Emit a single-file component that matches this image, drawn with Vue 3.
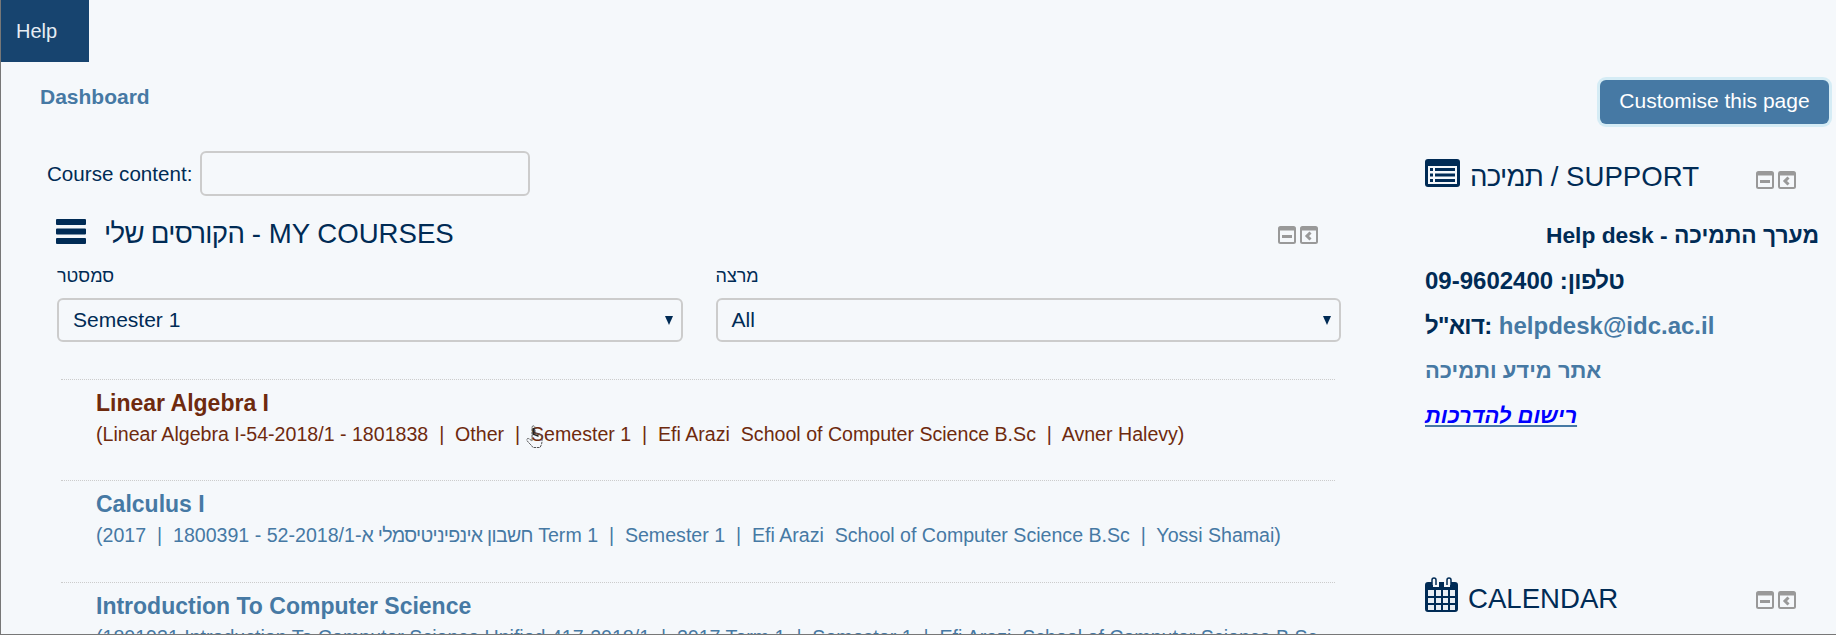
<script setup>
const courses = [
  {
    title: 'Linear Algebra I',
    lead: '(Linear Algebra I-54-2018/1 - 1801838  |  Other  |  Semester 1  |  Efi Arazi  School of Computer Science B.Sc  |  Avner Halevy)',
    active: true,
  },
  {
    title: 'Calculus I',
    lead: '(2017  |  ',
    hebrew: 'חשבון אינפיניטיסמלי א',
    rest: '-52-2018/1 - 1800391 Term 1  |  Semester 1  |  Efi Arazi  School of Computer Science B.Sc  |  Yossi Shamai)',
  },
  {
    title: 'Introduction To Computer Science',
    lead: '(1801931 Introduction To Computer Science Unified 417-2018/1  |  2017 Term 1  |  Semester 1  |  Efi Arazi  School of Computer Science B.Sc',
  },
]
</script>

<template>
  <div class="page">
    <nav class="topnav"><a class="help">Help</a></nav>

    <div class="crumbs">
      <a class="dashboard">Dashboard</a>
      <button class="customise">Customise this page</button>
    </div>

    <div class="columns">
      <main class="main">
        <div class="search">
          <label for="course-content">Course content:</label>
          <input id="course-content" type="text" />
        </div>

        <section class="block">
          <header class="block-head">
            <svg class="burger" viewBox="0 0 30 25"><path d="M1 0h28a1 1 0 0 1 1 1v4a1 1 0 0 1-1 1H1a1 1 0 0 1-1-1V1a1 1 0 0 1 1-1zM1 9.500h28a1 1 0 0 1 1 1v4a1 1 0 0 1-1 1H1a1 1 0 0 1-1-1v-4a1 1 0 0 1 1-1zM1 19h28a1 1 0 0 1 1 1v4a1 1 0 0 1-1 1H1a1 1 0 0 1-1-1v-4a1 1 0 0 1 1-1z" fill="#002b55" /></svg>
            <h2><span class="he">הקורסים שלי</span> - MY COURSES</h2>
            <span class="controls">
              <svg viewBox="0 0 18 18"><rect x="1" y="1" width="16" height="16" rx="1.500" fill="#f5f8fb" stroke="#999" stroke-width="2" /><path d="M1 1h16v3.500H1zM4 9h10v3H4z" fill="#999" /></svg>
              <svg viewBox="0 0 18 18"><rect x="1" y="1" width="16" height="16" rx="1.500" fill="#f5f8fb" stroke="#999" stroke-width="2" /><path d="M1 1h16v3.500H1z" fill="#999" /><path d="M10.500 6.500L7 10l3.500 3.500" fill="none" stroke="#999" stroke-width="3" /></svg>
            </span>
          </header>

          <div class="filters">
            <div class="filter">
              <label>סמסטר</label>
              <div class="select">Semester 1<span class="arrow"></span></div>
            </div>
            <div class="filter">
              <label>מרצה</label>
              <div class="select">All<span class="arrow"></span></div>
            </div>
          </div>

          <ul class="courses">
            <li v-for="c in courses" :key="c.title" :class="{ active: c.active }">
              <h3>{{ c.title }}</h3>
              <p>{{ c.lead }}<span v-if="c.hebrew" class="he">{{ c.hebrew }}</span>{{ c.rest }}</p>
            </li>
          </ul>
        </section>

        <svg class="cursor" viewBox="0 0 17 23">
          <path d="M6 2c.5-1.500 2.500-1.500 3 0v6l5 1.500c1.500.5 2 1.500 2 3v4c0 2.500-1 4-2 6H7c-1.500-2.500-4-4-6-7-.7-1.200.5-2.500 2-1.800l3 2.300z" fill="none" stroke="#555" stroke-width="1" stroke-dasharray="2.500 .8" />
          <path d="M6.500 3h2v6l4 1v2l-5-2-1 .5z" fill="#222" />
        </svg>
      </main>

      <aside class="side">
        <section class="panel support">
          <header class="block-head">
            <svg class="head-icon" viewBox="0 0 35 28">
              <rect width="35" height="28" rx="3" fill="#002b55" />
              <rect x="3" y="7" width="29" height="18" fill="#f5f8fb" />
              <path d="M5 9h3v3H5zM10 9h20v3H10zM5 14.500h3v3H5zM10 14.500h20v3H10zM5 20h3v3H5zM10 20h20v3H10z" fill="#002b55" />
            </svg>
            <h2><span class="he">תמיכה</span> / SUPPORT</h2>
            <span class="controls">
              <svg viewBox="0 0 18 18"><rect x="1" y="1" width="16" height="16" rx="1.500" fill="#f5f8fb" stroke="#999" stroke-width="2" /><path d="M1 1h16v3.500H1zM4 9h10v3H4z" fill="#999" /></svg>
              <svg viewBox="0 0 18 18"><rect x="1" y="1" width="16" height="16" rx="1.500" fill="#f5f8fb" stroke="#999" stroke-width="2" /><path d="M1 1h16v3.500H1z" fill="#999" /><path d="M10.500 6.500L7 10l3.500 3.500" fill="none" stroke="#999" stroke-width="3" /></svg>
            </span>
          </header>
          <div class="info">
            <p class="desk" dir="rtl">מערך התמיכה - Help desk</p>
            <p class="big"><span class="he">טלפון</span>: 09-9602400</p>
            <p class="big"><span class="he">דוא"ל</span>: <a class="link">helpdesk@idc.ac.il</a></p>
            <p><a class="link">אתר מידע ותמיכה</a></p>
            <p><a class="register">רישום להדרכות</a></p>
          </div>
        </section>

        <section class="panel calendar">
          <header class="block-head">
            <svg class="head-icon cal" viewBox="0 0 33 35">
              <path d="M3 5h5v5h6V5h5v5h6V5h5a3 3 0 0 1 3 3v24a3 3 0 0 1-3 3H3a3 3 0 0 1-3-3V8a3 3 0 0 1 3-3z" fill="#002b55" />
              <path d="M3 13h6v6H3zM11 13h5v6h-5zM18 13h5v6h-5zM25 13h5v6h-5zM3 21h6v5H3zM11 21h5v5h-5zM18 21h5v5h-5zM25 21h5v5h-5zM3 28h6v5H3zM11 28h5v5h-5zM18 28h5v5h-5zM25 28h5v5h-5z" fill="#e8eef4" />
              <path d="M7 8V3a2 2 0 0 1 4 0v5M22 8V3a2 2 0 0 1 4 0v5" fill="#f5f8fb" stroke="#002b55" stroke-width="1.500" />
            </svg>
            <h2>CALENDAR</h2>
            <span class="controls">
              <svg viewBox="0 0 18 18"><rect x="1" y="1" width="16" height="16" rx="1.500" fill="#f5f8fb" stroke="#999" stroke-width="2" /><path d="M1 1h16v3.500H1zM4 9h10v3H4z" fill="#999" /></svg>
              <svg viewBox="0 0 18 18"><rect x="1" y="1" width="16" height="16" rx="1.500" fill="#f5f8fb" stroke="#999" stroke-width="2" /><path d="M1 1h16v3.500H1z" fill="#999" /><path d="M10.500 6.500L7 10l3.500 3.500" fill="none" stroke="#999" stroke-width="3" /></svg>
            </span>
          </header>
          <p class="month">January 2018</p>
        </section>
      </aside>
    </div>
  </div>
</template>

<style>
html, body {
  margin: 0;
  background: #f5f8fb;
}
</style>

<style scoped>
.page {
  box-sizing: border-box;
  height: 635px;
  overflow: hidden;
  position: relative;
  background: #f5f8fb;
  border-left: 1px solid #777;
  border-bottom: 1px solid #777;
  font-family: "Liberation Sans", Arial, sans-serif;
  font-size: 21px;
  color: #002b55;
}

.he {
  letter-spacing: -0.7px;
}

.topnav {
  height: 62px;
}

.help {
  display: flex;
  align-items: center;
  width: 73px;
  height: 62px;
  padding-left: 15px;
  background: #17446f;
  color: #e6edf4;
  font-size: 20px;
}

.crumbs {
  display: flex;
  justify-content: space-between;
  align-items: flex-start;
  padding: 18px 7px 0 39px;
}

.dashboard {
  font-size: 21px;
  font-weight: bold;
  color: #4679a4;
  margin-top: 5px;
}

.customise {
  width: 229px;
  height: 44px;
  padding: 0 0 2px;
  border: 0;
  border-radius: 6px;
  background: #4679a4;
  box-shadow: 0 0 0 3px #d5ecf5;
  color: #fff;
  font-family: inherit;
  font-size: 21px;
}

.columns {
  display: flex;
  margin-top: 27px;
}

.main {
  width: 1424px;
  flex: none;
  position: relative;
}

.search {
  display: flex;
  align-items: center;
  gap: 8px;
  padding-left: 46px;
  font-size: 20.600px;
}

.search input {
  box-sizing: border-box;
  width: 330px;
  height: 45px;
  border: 2px solid #ccc;
  border-radius: 6px;
  background: transparent;
}

.block {
  padding: 22px 0 0 55px;
}

.block-head {
  display: flex;
  align-items: center;
  position: relative;
}

.block-head h2 {
  margin: 0;
  font-size: 27.600px;
  font-weight: normal;
  line-height: 32px;
}

.burger {
  width: 30px;
  height: 25px;
  margin: -5px 18px 0 0;
}

.controls {
  display: flex;
  gap: 4px;
  position: absolute;
  top: 8px;
  right: 0;
}

.controls svg {
  width: 18px;
  height: 18px;
}

.block > .block-head {
  width: 1262px;
}

.filters {
  display: flex;
  gap: 33px;
  margin: 14px 0 0 1px;
}

.filter {
  width: 625.500px;
}

.filter label {
  display: block;
  font-size: 18px;
  line-height: 24px;
  margin-bottom: 10px;
}

.select {
  box-sizing: border-box;
  display: flex;
  align-items: center;
  justify-content: space-between;
  height: 44px;
  padding: 0 8px 0 14px;
  border: 2px solid #ccc;
  border-radius: 6px;
}

.arrow {
  width: 0;
  height: 0;
  border-left: 4px solid transparent;
  border-right: 4px solid transparent;
  border-top: 9px solid #002b55;
}

.courses {
  list-style: none;
  margin: 37px 0 0 5px;
  padding: 0;
  width: 1274px;
}

.courses li {
  height: 101px;
  box-sizing: border-box;
  padding: 9px 0 0 35px;
  border-top: 1px dotted #ccc;
  color: #4679a4;
}

.courses li:nth-child(2) {
  height: 102px;
}

.courses li.active {
  color: #6e2a0e;
}

.courses h3 {
  margin: 0;
  font-size: 23px;
  line-height: 28px;
}

.courses p {
  margin: 4px 0 0;
  font-size: 19.600px;
  line-height: 26px;
  white-space: pre;
}

.cursor {
  position: absolute;
  left: 525px;
  top: 274px;
  width: 17px;
  height: 23px;
}

.side {
  flex: 1;
  min-width: 0;
  padding-top: 10px;
}

.panel .block-head {
  width: 373px;
}

.head-icon {
  width: 35px;
  height: 28px;
  margin-right: 10px;
  margin-top: -9px;
}

.head-icon.cal {
  width: 33px;
  height: 35px;
}

.support .controls {
  left: 331px;
  top: 10px;
}

.calendar .controls {
  left: 331px;
  top: 8px;
}

.info {
  font-size: 22px;
  font-weight: bold;
  margin-top: 20px;
  padding-right: 17px;
}

.info p {
  margin: 0;
  line-height: 45px;
}

.info .desk {
  font-size: 22.800px;
}

.info .big {
  font-size: 24px;
}

.link {
  color: #4679a4;
}

.register {
  color: #00f;
  font-style: italic;
  text-decoration: underline;
  text-decoration-color: #4679a4;
}

.calendar {
  margin-top: 145px;
}

.month {
  margin: 15px 0 0;
  padding-left: 143px;
  font-size: 19px;
}
</style>
